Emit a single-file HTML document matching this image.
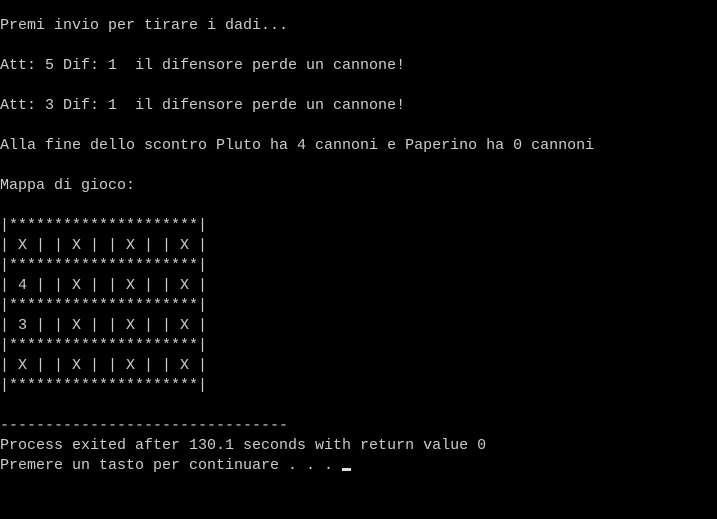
<!DOCTYPE html><html><head><style>
body{margin:0;background:#000;width:717px;height:519px;overflow:hidden}
pre{margin:0;position:absolute;left:0;top:16px;font-family:"Liberation Mono",monospace;font-size:15px;line-height:20px;color:#cccccc}
.c{display:inline-block;width:9px;height:3px;background:#ddd;vertical-align:-2px}
</style></head><body><pre>Premi invio per tirare i dadi...

Att: 5 Dif: 1  il difensore perde un cannone!

Att: 3 Dif: 1  il difensore perde un cannone!

Alla fine dello scontro Pluto ha 4 cannoni e Paperino ha 0 cannoni

Mappa di gioco:

|*********************|
| X | | X | | X | | X |
|*********************|
| 4 | | X | | X | | X |
|*********************|
| 3 | | X | | X | | X |
|*********************|
| X | | X | | X | | X |
|*********************|

--------------------------------
Process exited after 130.1 seconds with return value 0
Premere un tasto per continuare . . . <span class="c"></span></pre></body></html>
